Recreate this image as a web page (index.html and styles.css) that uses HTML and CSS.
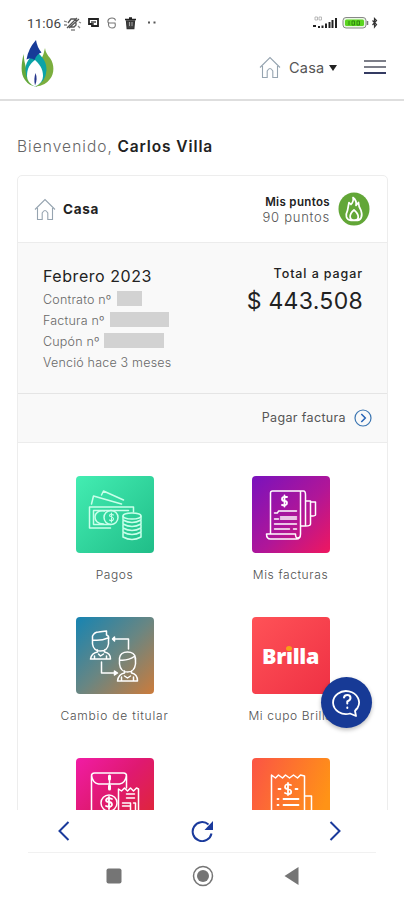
FILE: index.html
```html
<!DOCTYPE html>
<html lang="es">
<head>
<meta charset="utf-8">
<title>Inicio</title>
<link rel="stylesheet" href="styles.css">
</head>
<body>
<div class="status">
  <span class="clock">11:06</span>
  <svg class="status-icons" width="94" height="16" viewBox="0 0 94 16" fill="none" stroke="#444" stroke-width="1.3">
    <path d="M3 13 13 3M5 13 15 4M4 8l3-4h5v6l-2 2H6" stroke="#555"/><path d="M0 6l3 1M0 10l3 0M7 15h4M15 7l2 1M14 11l2 2" stroke="#888"/>
    <path d="M25 4h9v7h-6v-2h-3z" stroke-width="1.8" stroke="#222"/><path d="M27 7h5M28 9h2"/>
    <path d="M51 8h-5.500q-2 0-1.500-2.500 .8-2.500 4-2.500t3.500 2.500M44.500 8h6.500q1.500 5-3 5-4 0-3.500-5" stroke="#777" stroke-width="1.100"/>
    <path d="M61 4.500h11M65 3h3" stroke="#222" stroke-width="1.700"/><path d="M62.500 6h8l-.7 7.500h-6.600z" fill="#444" stroke="#333"/><path d="M65.500 7v4M68 7v4" stroke="#bbb" stroke-width=".8"/>
    <path d="M84 7.500h2M89.500 7.500h2" stroke="#555" stroke-width="1.800"/>
  </svg>
  <svg class="signal" width="66" height="16" viewBox="0 0 66 16">
    <path d="M2 2h2.500v3H2zM6 2h2.500v3H6z" fill="none" stroke="#aaa" stroke-width=".8"/>
    <path d="M0 10h3v2H0zM5 11h2v2H5zM8.500 10.500h2V13h-2zM12 8.500h2V13h-2zM15.500 7h2V13h-2zM18.500 5h2V13h-2zM22 3h2v10h-2z" fill="#222"/>
    <rect x="30" y="2.500" width="23" height="10.500" rx="3" fill="#e9f7e2" stroke="#888"/>
    <rect x="32" y="4.500" width="19" height="6.500" rx="1.500" fill="#5bd51f"/>
    <path d="M54.500 6v4" stroke="#777" stroke-width="1.500"/>
    <path d="M36 6v4M39 6h2.500v4H39zM44 6h2.500v4H44z" stroke="#318711" fill="none"/>
    <path d="m59.500 5.500 4 4-2 2.500V3.500l2 2L59.500 10" fill="none" stroke="#333" stroke-width="1.200"/>
  </svg>
</div>
<header class="top">
  <svg class="logo" width="34" height="48" viewBox="0 0 34 48">
    <path d="M3.500 14C1.500 24 0 33 5 40q4 6 12 6.500L15 20 6 28Q4 21 3.500 14z" fill="#64a83b"/>
    <path d="M25 8q.5 5 5 10c5 7 4 16 0 21q-5 7-14 7.500L21 20q3-6 4-12z" fill="#7bae3e"/>
    <path d="M15 8c0 8-10 11-9.500 22Q6 42 15 46.500 26 42 26.500 30C27 18 17 14 15 8z" fill="#0ba3a7"/>
    <path d="M16 0Q8 9 6.500 19.500q4-2 8 .5 2-6 7-7.500Q17 7 16 0z" fill="#173b98"/>
    <path d="M15 20C10 24 7 28 7 36q0 7 8 10.500 8-3.500 8-10.500c0-8-4-12-8-16z" fill="#fff"/>
    <path d="M15.500 33q-2 6-.5 12.500 3-6 .5-12.500z" fill="#26368c"/>
  </svg>
  <div class="place">
    <svg class="house" width="22" height="23" viewBox="0 0 22 23"><path d="M1 11.500 11 1.500l10 10M3.500 10v11.500h4.700V15q2.800-5 5.600 0v6.500h4.700V10"/></svg>
    <span class="place-name">Casa</span>
    <i class="caret"></i>
  </div>
  <div class="burger"><i></i><i></i><i></i></div>
</header>
<main>
  <p class="welcome"><span class="hello">Bienvenido,</span> <b>Carlos Villa</b></p>
  <section class="card">
    <div class="account">
      <svg class="house" width="22" height="23" viewBox="0 0 22 23"><path d="M1 11.500 11 1.500l10 10M3.500 10v11.500h4.700V15q2.800-5 5.600 0v6.500h4.700V10"/></svg>
      <b class="account-name">Casa</b>
      <div class="points"><b>Mis puntos</b><span>90 puntos</span></div>
      <svg class="flame" width="32" height="34" viewBox="0 0 32 34">
        <ellipse cx="16" cy="17" rx="15.500" ry="16.500" fill="#62a637"/>
        <path d="M15 5.500q4 3 3 8l2.500-3q0 4 2.500 8c2 6 0 10-5 10h-5c-5-1-6-5-3.500-10l1.500-8 2 2q3-3 2-7zM16 18c-6 5-4 10-1 10h2c4 0 5-5-1-10z" fill="none" stroke="#fff" stroke-width="1.700" stroke-linejoin="round"/>
      </svg>
    </div>
    <div class="bill">
      <div class="details">
        <h2>Febrero 2023</h2>
        <p><span class="l1">Contrato nº</span><i class="mask m1"></i></p>
        <p><span class="l2">Factura nº</span><i class="mask m2"></i></p>
        <p><span class="l3">Cupón nº</span><i class="mask m3"></i></p>
        <p><span class="l4">Venció hace 3 meses</span></p>
      </div>
      <div class="total"><b>Total a pagar</b><span>$ 443.508</span></div>
    </div>
    <div class="pay">
      <span>Pagar factura</span>
      <svg width="18" height="18" viewBox="0 0 18 18" fill="none" stroke="#3b75b1" stroke-width="1.200"><circle cx="9" cy="9" r="8"/><path d="m7.300 5 4 4-4 4" stroke="#2462b6" stroke-width="1.500"/></svg>
    </div>
    <div class="grid">
      <div class="item">
        <svg class="tile pagos" viewBox="0 0 77 77">
          <path d="M25 19l2-4 20 9M15 28l2-8 28 8M34 52H13V31h44v5"/><path d="M17 34.500h35M17 48.500h17M17 35v13"/>
          <path d="M28 35c-12-2-13 13-1 13"/><circle cx="34.500" cy="41.500" r="7"/>
          <path d="M37 39q-4-2-4 1 4 1 4 3-1 3-4 1M35 37v9" stroke-width="1.100"/>
          <ellipse cx="55.500" cy="40" rx="9" ry="3"/><path d="M46.500 40v21q9 5 18 0V40M46.500 44q9 5 18 0M46.500 48q9 5 18 0M46.500 52q9 5 18 0M46.500 56q9 5 18 0"/>
        </svg>
        <span class="c1">Pagos</span>
      </div>
      <div class="item">
        <svg class="tile facturas" viewBox="0 0 77 77">
          <path d="M18 58V17q0-2 2-2h31q2 0 2 4v31h-5M48 58q0 5-4 5H18q-4 0-4-5h29q0 4 2 4 3 0 3-4V15M53 25h5v23q0 2-5 2M58 26h5v13q0 1-5 1"/>
          <path d="M34.500 21q-5-1-5 2 0 2 2.500 2t2.500 2q0 3-5 2M32 19.500v11" stroke-width="1.800"/>
          <path d="M22 37h3l1-2h18M22 43h4M28 41h16M28 43h16M22 48h22M22 53h15M41 53h3"/>
        </svg>
        <span class="c2">Mis facturas</span>
      </div>
      <div class="item">
        <svg class="tile titular" viewBox="0 0 77 77">
          <path d="M16 19q2-4 6-4l8-1v4q3 1 2 5v4q-1 7-8 7t-8-7zM16.500 23q8 1 15-2M21 33v2q-6 1-7 7h20q0-6-6-7v-2M18 39v3M30 39v3M22 37l2 2 3-2"/>
          <path d="M43 41q1-6 8-6t8 6v6q-1 8-8 8t-8-8zM43.500 43q8 1 15-4 0 3 .5 4M48 54v2q-6 1-7 8h20q0-7-6-8v-2M45 60v4M57 60v4M48 59l3 2 3-2"/>
          <path d="M37 22h15v10M25 45v11h13"/><path d="m38 20-2 2 2 2zM38 54l3 2-3 2z" fill="#fff"/>
        </svg>
        <span class="c3">Cambio de titular</span>
      </div>
      <div class="item">
        <div class="tile brilla"><b>Br<span class="dot-i">ı</span>lla</b></div>
        <span class="c4">Mi cupo Brilla</span>
      </div>
      <div class="item">
        <svg class="tile sobre" viewBox="0 0 77 77">
          <path d="M15 77V18q0-3 3-3h29q3 0 3 3v12M15 17q1 8 7 9h21q6-1 7-9"/>
          <path d="M33 18v3M33 28v3" stroke-width="3"/><path d="M33 20v8"/><circle cx="32.500" cy="45" r="8"/>
          <path d="M35.500 41q-5-2-6 1 0 2 3 2t3 3q-1 3-6 1M32.500 39v12" stroke-width="1.800"/><path d="M42 77V31l3 2 3-3 3 3 3-3 3 3 3-3 2 1v46M50 36h8M50 40h8M46 45h8v15M46 48h8M57 45h2v13"/>
        </svg>
      </div>
      <div class="item">
        <svg class="tile recibo" viewBox="0 0 77 77">
          <path d="M19 77V17l4 3 3-3 4 3 3-3 4 3 4-3 4 3 3-3 4 1v59M52 38h7v39"/>
          <path d="M38.500 27q-6-2-6 2 0 2 3 2 4 1 3 4-2 2-6 0M35.500 25v12" stroke-width="1.800"/><path d="M26 31h2M43 31h2M25 41h1M31 41h15M25 47h1M31 47h15" stroke-width="1.800"/>
        </svg>
      </div>
    </div>
  </section>
</main>
<div class="browser-nav">
  <svg width="12" height="20" viewBox="0 0 12 20"><path d="m10.500 1-9 9 9 9"/></svg>
  <svg class="reload" width="24" height="22" viewBox="0 0 24 22"><path d="M21.500 13.500a9.500 9.500 0 1 1-3-9" stroke-width="2.500"/><path d="M23 1v9h-8.500z" class="solid"/></svg>
  <svg width="12" height="20" viewBox="0 0 12 20"><path d="m1.500 1 9 9-9 9"/></svg>
</div>
<div class="system-nav">
  <svg width="16" height="16" viewBox="0 0 16 16"><rect x=".5" y=".5" width="15" height="15" rx="2" fill="#757575"/></svg>
  <svg width="22" height="22" viewBox="0 0 22 22"><circle cx="11" cy="11" r="9.500" fill="none" stroke="#757575" stroke-width="1.500"/><circle cx="11" cy="11" r="6" fill="#757575"/></svg>
  <svg width="15" height="18" viewBox="0 0 15 18"><path d="M14.500 0v18L.5 9z" fill="#757575"/></svg>
</div>
<div class="help">
  <svg width="30" height="30" viewBox="0 0 30 30" fill="none" stroke="#fff" stroke-width="1.800" stroke-linecap="round" stroke-linejoin="round"><path d="M18 25.500A13 11.500 0 1 1 25.500 20q-2 2-2.500 3l1 5z"/><path d="M12 9.500q.5-2.500 3.300-2.500 3.200 0 3.200 3 0 2-3.200 3.500v2M15.300 19.500v.5" stroke-width="2"/></svg>
</div>
</body>
</html>
```
FILE: styles.css
```css
* { box-sizing: border-box; }
body { margin: 0; width: 404px; height: 900px; overflow: hidden; position: relative; display: flex; flex-direction: column; background: #fff; font-family: Inter, "Open Sans", sans-serif; color: #222; }
svg { display: block; flex: none; }
p, h2 { margin: 0; }
span, b { white-space: nowrap; }

.status { height: 40px; flex: none; display: flex; align-items: center; padding: 5px 25px 0 27px; }
.clock { font: 13.5px/16px Roboto, sans-serif; color: #444; width: 36px; letter-spacing: .1px; }
.status-icons { margin-left: 1px; }
.signal { margin-left: auto; }

.top { height: 61px; flex: none; display: flex; align-items: flex-start; padding: 0 18px 0 20px; border-bottom: 2px solid #dedede; }
.place { display: flex; align-items: center; margin-left: auto; padding-top: 16px; }
.house path { fill: none; stroke: #96a4b0; stroke-width: 1.1; }
.place-name { font-size: 14.5px; line-height: 20px; color: #555; margin: 0 0 0 8px; width: 36px; letter-spacing: .2px; }
.caret { border: 4.5px solid transparent; border-top: 6px solid #222; border-bottom: 0; margin-left: 4px; }
.burger { display: flex; flex-direction: column; gap: 4px; width: 22px; margin: 20px 0 0 27px; }
.burger i { height: 2px; background: #7c7e88; }
.burger i:last-child { background: #343b62; }

main { flex: none; height: 709px; overflow: hidden; padding: 35px 16px 0 17px; }
.welcome { font-size: 15.5px; line-height: 22px; }
.hello { color: #666; font-weight: 300; letter-spacing: 1.05px; }
.welcome b { font-weight: 600; letter-spacing: .9px; }
.card { margin-top: 17px; height: 700px; border: 1px solid #ededed; border-radius: 5px; }
.account { height: 66px; display: flex; align-items: center; padding: 0 17px 0 16px; }
.account-name { font-size: 13.5px; font-weight: 700; margin: 0 0 0 7px; letter-spacing: .7px; }
.points { margin-left: auto; display: flex; flex-direction: column; align-items: flex-end; line-height: 15px; margin-right: 8px; }
.points b { font-size: 11.5px; font-weight: 600; letter-spacing: .35px; padding-top: 1px; }
.points span { font-size: 13px; font-weight: 300; color: #555; letter-spacing: .75px; }
.bill { height: 152px; display: flex; justify-content: space-between; background: #f9f9f9; border-top: 1px solid #ececec; border-bottom: 1px solid #e5e5e5; padding: 22px 24px 0 25px; }
h2 { font-size: 16px; line-height: 22px; font-weight: 400; letter-spacing: .55px; }
.details p { height: 21px; display: flex; align-items: center; font-size: 12.5px; font-weight: 300; color: #686868; letter-spacing: .2px; }
.details p span { padding-top: 3px; }
.mask { background: #d2d2d2; height: 15px; margin-top: 1px; }
.l1 { width: 74px; } .l2 { width: 67px; } .l3 { width: 61px; }
.m1 { width: 25px; } .m2 { width: 59px; } .m3 { width: 60px; }
.total { display: flex; flex-direction: column; align-items: flex-end; }
.total b { font-size: 12.5px; line-height: 18px; font-weight: 500; letter-spacing: .9px; }
.total span { font-size: 23px; line-height: 36px; letter-spacing: .3px; }
.pay { height: 49px; display: flex; align-items: center; justify-content: flex-end; gap: 8px; padding-right: 15px; background: #f9f9f9; border-bottom: 1px solid #ececec; font-size: 12.5px; color: #555; letter-spacing: .35px; }
.pay span { padding-bottom: 1px; }
.grid { display: grid; grid-template-columns: 176px 176px; grid-auto-rows: 141px; justify-content: center; padding-top: 33px; }
.item { display: flex; flex-direction: column; align-items: center; font-size: 12px; font-weight: 300; color: #505050; letter-spacing: .6px; }
.item > span { margin-top: 13px; line-height: 18px; }
.item .c3 { letter-spacing: .8px; }
.tile { width: 78px; height: 77px; border-radius: 4px; fill: none; stroke: #fff; stroke-width: 1.5; stroke-linejoin: round; stroke-linecap: round; }
.pagos { background: linear-gradient(135deg, #43edb2, #20bd88); }
.pagos path, .pagos circle, .pagos ellipse { stroke: #c9ffea; }
.facturas { background: linear-gradient(135deg, #7912bd, #b01698 55%, #ef175f); }
.titular { background: linear-gradient(135deg, #1684b2, #688683 50%, #cc7b3b); }
.brilla { display: flex; align-items: center; justify-content: center; background: linear-gradient(135deg, #ff5257, #ef3144); color: #fff; }
.brilla b { font-family: "Open Sans", sans-serif; font-size: 21.5px; line-height: 24px; font-weight: 800; letter-spacing: -.3px; }
.dot-i { position: relative; }
.dot-i::after { content: ""; position: absolute; left: 0; top: 5px; width: 6px; height: 5px; border-radius: 50%; background: #f7a116; }
.sobre { background: linear-gradient(135deg, #f11ca5, #df1970 45%, #df2734 90%); }
.recibo { background: linear-gradient(110deg, #fb5445, #ff9316 85%); }

.browser-nav { height: 43px; flex: none; display: flex; justify-content: space-between; align-items: center; margin: 0 28px; padding: 0 35px 0 30px; border-bottom: 1px solid #f1f1f1; }
.browser-nav path { fill: none; stroke: #1a3a9c; stroke-width: 2; }
.browser-nav .solid { fill: #1a3a9c; stroke: none; }
.browser-nav .reload { margin-left: 5px; }
.system-nav { height: 47px; display: flex; justify-content: space-between; align-items: center; padding: 0 105px 1px 106px; }
.help { position: absolute; left: 321px; top: 677px; width: 51px; height: 51px; border-radius: 50%; background: #173a96; display: flex; align-items: center; justify-content: center; box-shadow: 0 2px 4px #0004; }
```
